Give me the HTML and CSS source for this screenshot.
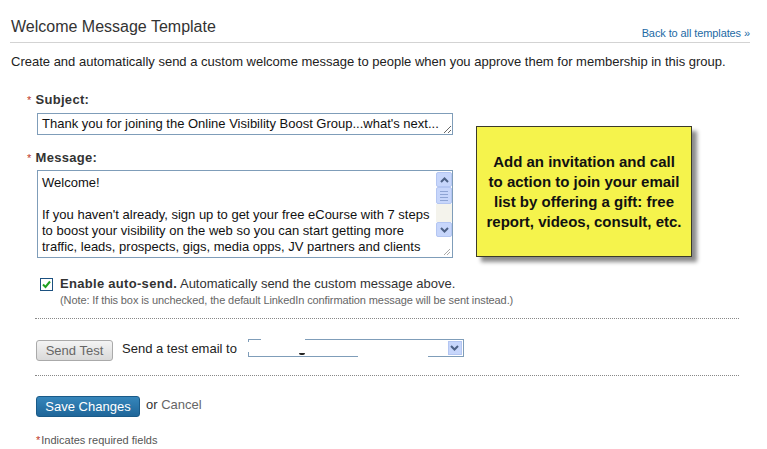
FILE: index.html
```html
<!DOCTYPE html>
<html lang="en">
<head>
	<meta charset="UTF-8">
	<title>Welcome Message Template</title>
	<link rel="stylesheet" href="styles.css">
</head>
<body>
	<div id="page">
		<div class="hd">
			<h1>Welcome Message Template</h1>
			<a href="#" class="back">Back to all templates &raquo;</a>
		</div>
		<p class="intro">Create and automatically send a custom welcome message to people when you approve them for membership in this group.</p>

		<div class="fields">
			<div class="col">
				<label class="lbl"><span class="req">*</span> Subject:</label>
				<textarea class="subject" rows="1">Thank you for joining the Online Visibility Boost Group...what's next...</textarea>

				<label class="lbl lbl-msg"><span class="req">*</span> Message:</label>
				<div class="msg-box">
					<textarea class="message" wrap="off">Welcome!

If you haven't already, sign up to get your free eCourse with 7 steps
to boost your visibility on the web so you can start getting more
traffic, leads, prospects, gigs, media opps, JV partners and clients</textarea>
					<div class="sbar">
						<span class="sb-btn"><svg width="9" height="6" viewBox="0 0 9 6"><path d="M1 5 L4.5 1.5 L8 5" fill="none" stroke="#4d6185" stroke-width="2"/></svg></span>
						<span class="sb-thumb"><i></i><i></i><i></i><i></i></span>
						<span class="sb-track"></span>
						<span class="sb-btn"><svg width="9" height="6" viewBox="0 0 9 6"><path d="M1 1 L4.5 4.5 L8 1" fill="none" stroke="#4d6185" stroke-width="2"/></svg></span>
						<span class="sb-corner"><svg width="10" height="10" viewBox="0 0 10 10"><path d="M9 3 L3 9 M9 6 L6 9" stroke="#aaa" stroke-width="1"/></svg></span>
					</div>
				</div>
			</div>
			<div class="sticky">Add an invitation and call<br>to action to join your email<br>list by offering a gift: free<br>report, videos, consult, etc.</div>
		</div>

		<div class="auto">
			<span class="chk"><svg width="13" height="13" viewBox="0 0 13 13"><rect x="0.5" y="0.5" width="12" height="12" fill="#fff" stroke="#1c5180"/><path d="M3 6.5 L5.5 9 L10 3.5" fill="none" stroke="#21a121" stroke-width="2"/></svg></span>
			<span><b>Enable auto-send.</b> Automatically send the custom message above.</span>
		</div>
		<p class="note">(Note: If this box is unchecked, the default LinkedIn confirmation message will be sent instead.)</p>

		<div class="test-row">
			<button class="btn-test">Send Test</button>
			<span class="test-lbl">Send a test email to</span>
			<div class="sel">
				<span class="sel-btn"><svg width="9" height="6" viewBox="0 0 9 6"><path d="M1 1 L4.5 4.5 L8 1" fill="none" stroke="#4d6185" stroke-width="2"/></svg></span>
				<span class="blank blank-top"></span>
				<span class="blank blank-left"></span>
				<span class="blank blank-bot"></span>
				<span class="smudge"></span>
			</div>
		</div>

		<div class="save-row">
			<button class="btn-save">Save Changes</button>
			<span class="or">or <a href="#">Cancel</a></span>
		</div>
		<p class="foot"><span class="req">*</span>Indicates required fields</p>
	</div>
</body>
</html>
```

FILE: styles.css
```css
body,div,p,h1,textarea,button{margin: 0;padding: 0}
body{background: #fff;font: 13px/16px "Liberation Sans", Arial, sans-serif;color: #222;}
a{text-decoration: none;}
#page{padding: 0 17px 0 10px;}

.hd{display: flex;justify-content: space-between;align-items: flex-end;width: 740px;padding: 17px 0 5px;border-bottom: 1px solid #d3d3d3;}
.hd h1{font: 400 16px/20px "Liberation Sans", Arial, sans-serif;color: #333;padding-left: 1px;}
.back{font-size: 11px;line-height: 13px;color: #1d6aa5;margin-bottom: -3px;letter-spacing: -0.1px;}
.intro{margin-top: 11px;padding-left: 1px;color: #222;}

.fields{display: flex;align-items: flex-start;padding-left: 17px;margin-top: 22px;}
.col{display: flex;flex-direction: column;width: 426px;}
.lbl{font-weight: 700;color: #333;letter-spacing: 0.3px;}
.lbl-msg{margin-top: 15px;}
.req{color: #c0392b;font-weight: 400;font-size: 11px;}

.subject{display: block;margin: 5px 0 0 10px;width: 416px;height: 22px;box-sizing: border-box;border: 1px solid #7f9db9;padding: 2px 4px;font: 13px/16px "Liberation Sans", Arial, sans-serif;color: #111;overflow: hidden;resize: both;}

.msg-box{display: flex;margin: 4px 0 0 10px;width: 416px;height: 88px;box-sizing: border-box;border: 1px solid #7f9db9;}
.message{flex: 1;border: 0;outline: 0;resize: none;overflow: hidden;padding: 4px 4px;font: 13px/16px "Liberation Sans", Arial, sans-serif;color: #111;white-space: pre;}
.sbar{display: flex;flex-direction: column;width: 16px;padding-top: 1px;}
.sb-btn{display: flex;align-items: center;justify-content: center;height: 15px;background: #c7d6fb;border: 1px solid #b4c6f2;border-radius: 2px;box-sizing: border-box;}
.sb-thumb{display: flex;flex-direction: column;align-items: center;justify-content: center;gap: 2px;height: 17px;background: #c7d6fb;border: 1px solid #b4c6f2;border-radius: 2px;box-sizing: border-box;}
.sb-thumb i{display: block;width: 8px;height: 1px;background: #8ea4d4;}
.sb-track{height: 18px;background: #f4f3ec;}
.sb-corner{flex: 1;display: flex;align-items: flex-end;justify-content: flex-end;padding: 0 1px 1px 0;}

.sticky{margin: 34px 0 0 23px;width: 216px;height: 131px;box-sizing: border-box;background: #f5f34c;border: 1px solid #3a3a2a;box-shadow: 5px 5px 4px #8c8c8c;display: flex;align-items: center;justify-content: center;text-align: center;padding: 0 2px;white-space: nowrap;font: 700 15px/20px "Liberation Sans", Arial, sans-serif;color: #111;}

.auto{display: flex;align-items: center;margin: 18px 0 0 30px;color: #333;}
.chk{display: block;width: 13px;height: 13px;margin-right: 7px;}
.chk svg{display: block;}
.auto b{letter-spacing: 0.3px;color: #333;}
.note{margin: 1px 0 0 50px;font-size: 11px;line-height: 14px;color: #666;letter-spacing: -0.1px;}

.test-row{display: flex;align-items: center;margin-top: 11px;padding-top: 18px;border-top: 1px dotted #888;width: 703px;margin-left: 25px;padding-left: 1px;padding-bottom: 14px;border-bottom: 1px dotted #888;}
.btn-test{width: 77px;height: 21px;border: 1px solid #aaa;border-radius: 3px;background: linear-gradient(#f4f4f4, #d9d9d9);font: 13px "Liberation Sans", Arial, sans-serif;color: #666;margin-top: 3px;}
.test-lbl{margin-left: 9px;color: #222;}
.sel{position: relative;margin: -2px 0 0 11px;width: 216px;height: 18px;box-sizing: border-box;border: 1px solid #7f9db9;}
.sel-btn{position: absolute;right: 1px;top: 1px;width: 14px;height: 14px;background: #c7d6fb;border: 1px solid #b4c6f2;display: flex;align-items: center;justify-content: center;box-sizing: border-box;}
.blank{position: absolute;background: #fff;}
.blank-top{left: 12px;top: -2px;width: 44px;height: 4px;}
.blank-left{left: -2px;top: 2px;width: 4px;height: 10px;}
.blank-bot{left: 109px;bottom: -2px;width: 70px;height: 4px;}
.smudge{position: absolute;left: 50px;bottom: 1px;width: 6px;height: 2px;background: #222;border-radius: 0 0 3px 3px;}

.save-row{display: flex;align-items: center;margin: 20px 0 0 26px;}
.btn-save{width: 104px;height: 21px;border: 1px solid #1a5a88;border-radius: 3px;background: linear-gradient(#3686bb, #1f6699);font: 13px "Liberation Sans", Arial, sans-serif;color: #fff;}
.or{margin-left: 6px;color: #333;margin-top: -3px;}
.or a{color: #666;}
.foot{margin: 15px 0 0 26px;font-size: 11px;color: #555;}
.foot .req{margin-right: 1px;}
```
